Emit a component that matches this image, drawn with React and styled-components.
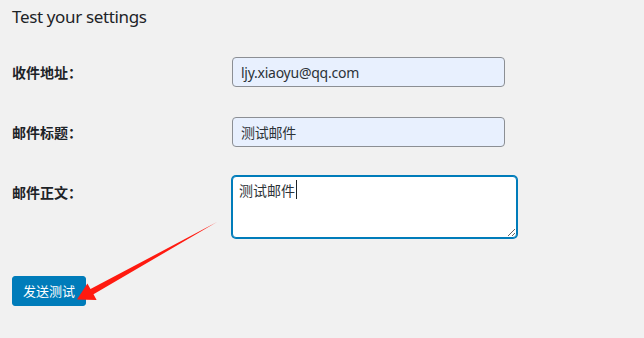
import React from "react";
import styled, { createGlobalStyle } from "styled-components";

const Global = createGlobalStyle`
  html, body { margin: 0; padding: 0; background: #f1f1f1; }
  body {
    font-family: "Noto Sans", "Noto Sans CJK SC", sans-serif;
    color: #1d2327;
    width: 644px;
    height: 338px;
    overflow: hidden;
  }
`;

const Page = styled.div`
  position: relative;
  width: 644px;
  height: 338px;
  padding: 0 12px;
  box-sizing: border-box;
`;

const Title = styled.h2`
  margin: 0;
  padding-top: 5px;
  font-size: 17px;
  line-height: 24px;
  font-weight: 400;
  letter-spacing: -0.35px;
  color: #1d2327;
`;

const FormTable = styled.div`
  display: grid;
  grid-template-columns: 220px auto;
  row-gap: 30px;
  margin-top: 28px;
  justify-content: start;
`;

const Label = styled.label`
  font-family: "Noto Sans CJK SC", sans-serif;
  font-size: 14px;
  font-weight: 700;
  color: #1d2327;
  display: flex;
  align-items: ${(p) => (p.$top ? "flex-start" : "center")};
  padding-top: ${(p) => (p.$top ? "6px" : "0")};
  line-height: 18px;
`;

const Input = styled.input`
  box-sizing: border-box;
  width: 273px;
  height: 30px;
  margin: 0;
  padding: 0 8px;
  border: 1px solid #8c8f94;
  border-radius: 4px;
  background: #e8f0fe;
  font-family: "Noto Sans", "Noto Sans CJK SC", sans-serif;
  font-size: 14px;
  letter-spacing: -0.25px;
  color: #2c3338;
  outline: none;
`;

const AreaWrap = styled.div`
  position: relative;
  width: 285px;
  height: 62px;
  margin-top: -1px;
`;

const TextArea = styled.textarea`
  box-sizing: border-box;
  display: block;
  width: 285px;
  height: 62px;
  margin: 0;
  padding: 3px 6px;
  border: 1px solid #007cba;
  box-shadow: 0 0 0 1px #007cba;
  border-radius: 4px;
  background: #fff;
  font-family: "Noto Sans CJK SC", sans-serif;
  font-size: 14px;
  line-height: 20px;
  color: #2c3338;
  outline: none;
  resize: both;
`;

const Caret = styled.span`
  position: absolute;
  left: 64px;
  top: 4px;
  width: 1px;
  height: 19px;
  background: #1d2327;
`;

const Submit = styled.div`
  margin-top: 38px;
`;

const Button = styled.button`
  box-sizing: border-box;
  height: 30px;
  padding: 0 10px;
  border: 1px solid #007cba;
  border-radius: 3px;
  background: #007cba;
  color: #fff;
  font-family: "Noto Sans CJK SC", sans-serif;
  font-size: 13px;
  line-height: 28px;
  cursor: pointer;
`;

const Arrow = styled.svg`
  position: absolute;
  left: 0;
  top: 0;
  pointer-events: none;
`;

export default function App() {
  return (
    <Page>
      <Global />
      <Title>Test your settings</Title>
      <FormTable>
        <Label>收件地址：</Label>
        <Input type="text" defaultValue="ljy.xiaoyu@qq.com" />
        <Label>邮件标题：</Label>
        <Input type="text" defaultValue="测试邮件" />
        <Label $top>邮件正文：</Label>
        <AreaWrap>
          <TextArea defaultValue="测试邮件" />
          <Caret />
        </AreaWrap>
      </FormTable>
      <Submit>
        <Button type="button">发送测试</Button>
      </Submit>
      <Arrow width="644" height="338" viewBox="0 0 644 338">
        <polygon
          points="217,222 93.5,294.3 96.6,300 77,299.5 87.4,283.4 90.5,289.1"
          fill="#ff1a10"
        />
      </Arrow>
    </Page>
  );
}
